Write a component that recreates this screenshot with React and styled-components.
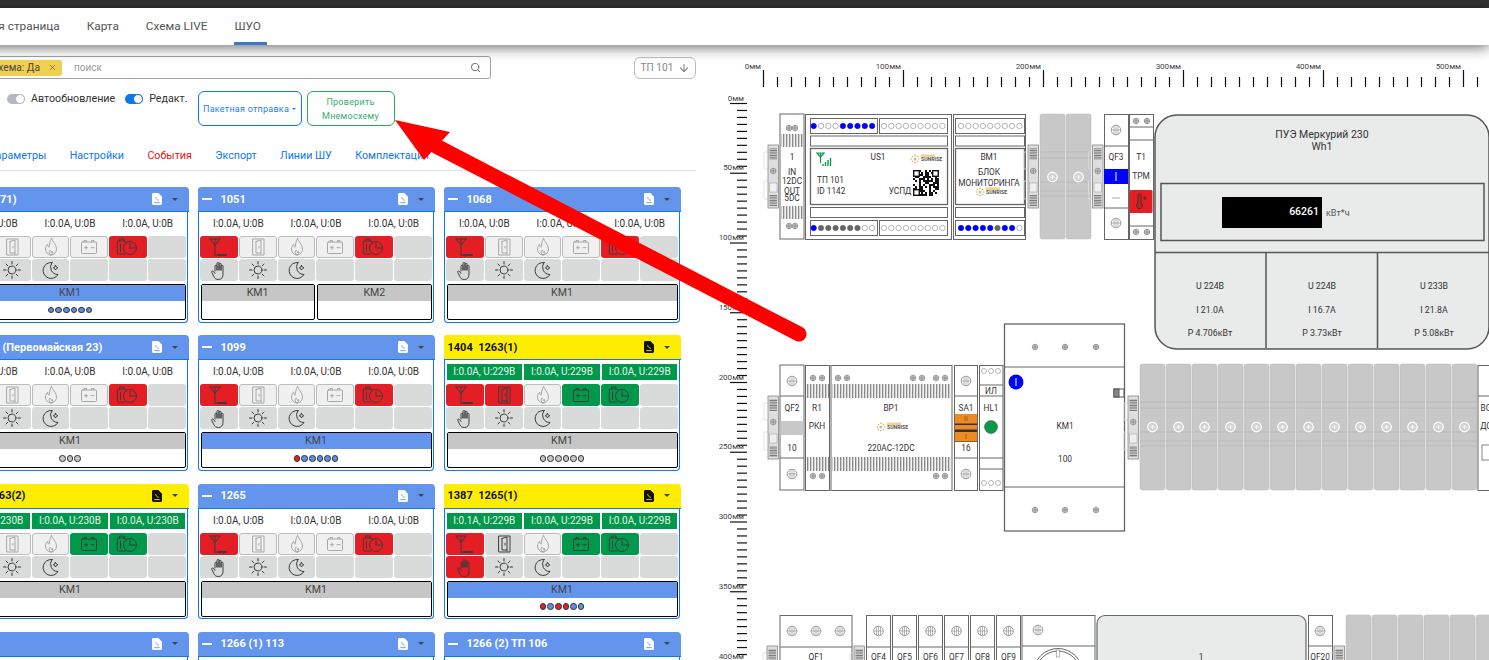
import React from "react";
import styled, { createGlobalStyle } from "styled-components";
import { Search, X, ArrowDown } from "lucide-react";

const GlobalStyle = createGlobalStyle`
    html, body {
        margin: 0;
        padding: 0;
        background: #fff;
        overflow: hidden;
        font-family: Roboto, "Liberation Sans", sans-serif;
    }
`;

const info0 = ["I:0.0A, U:0B", "I:0.0A, U:0B", "I:0.0A, U:0B"];
const info229 = ["I:0.0A, U:229B", "I:0.0A, U:229B", "I:0.0A, U:229B"];
const info230 = ["I:0.0A, U:230B", "I:0.0A, U:230B", "I:0.0A, U:230B"];
const iconOrder = ["antenna", "door", "fire", "battery", "timer"];
const B = "#5f8fe4";
const R = "#e31e24";
const G = "#c5c6c5";

const cards = [
    { title: "103 (71)", info: info0, states: ["red", "off", "off", "off", "red"], km: [{ name: "KM1", on: true, dots: [B, B, B, B, B, B] }] },
    { title: "1051", info: info0, states: ["red", "off", "off", "off", "red"], km: [{ name: "KM1" }, { name: "KM2" }] },
    { title: "1068", info: info0, states: ["red", "off", "off", "off", "red"], km: [{ name: "KM1" }] },
    { title: "1098 (Первомайская 23)", info: info0, states: ["red", "off", "off", "off", "red"], km: [{ name: "KM1", dots: [G, G, G] }] },
    { title: "1099", info: info0, states: ["red", "off", "off", "off", "red"], km: [{ name: "KM1", on: true, dots: [R, B, B, B, B, B] }] },
    { title: "1404  1263(1)", yellow: true, info: info229, states: ["red", "red", "off", "green", "green"], km: [{ name: "KM1", dots: [G, G, G, G, G, G] }] },
    { title: "1403  1263(2)", yellow: true, info: info230, states: ["red", "off", "off", "green", "green"], km: [{ name: "KM1" }] },
    { title: "1265", info: info0, states: ["red", "off", "off", "off", "red"], km: [{ name: "KM1" }] },
    { title: "1387  1265(1)", yellow: true, info: ["I:0.1A, U:229B", "I:0.0A, U:229B", "I:0.0A, U:229B"], states: ["red", "gray", "off", "green", "green"], hand: "red", km: [{ name: "KM1", on: true, dots: [R, B, R, R, B, B] }] },
    { title: "1064", info: info0, states: ["red", "off", "off", "off", "red"], km: [{ name: "KM1" }] },
    { title: "1266 (1) 113", info: info0, states: ["red", "off", "off", "off", "red"], km: [{ name: "KM1" }] },
    { title: "1266 (2) ТП 106", info: info0, states: ["red", "off", "off", "off", "red"], km: [{ name: "KM1" }] },
];

const CellIcon = ({ name, muted }) => (
    <CellSvg viewBox="0 0 38 22" $muted={muted}>
        {name === "antenna" && (
            <>
                <path d="M10 3h10M10 3l5 6.5L20 3M15 3v16M15 19h3" />
                <path d="M18 19h8" strokeDasharray="1.6 .6" strokeWidth="2" />
            </>
        )}
        {name === "door" && (
            <>
                <rect x="14" y="3" width="11" height="16" />
                <path d="M17 5.5l5-1.5v14M17 5.5V17h5M20 10.5v1.5" />
            </>
        )}
        {name === "fire" && (
            <path d="M19.5 2.5c.6 3.2 5 5.6 5 10.5a5.5 6 0 0 1-11 0c0-2.3 1-3.6 2.2-4.800 0 1.800.5 2.600 1.400 3 .8-3 .4-5.800 2.400-8.700zM19 19c-2-1-2.500-3-1-5 .5 1 1.500 1 2 3 .3-.6.5-1 .5-1.500.7 1.500.3 3-1.500 3.500z" />
        )}
        {name === "battery" && (
            <>
                <rect x="11.5" y="6" width="15" height="11.5" rx="1" />
                <path d="M14 6V4.500h2.500V6M21.500 6V4.500H24V6M14.500 11.700h3M16 10.200v3M21 11.700h3" />
            </>
        )}
        {name === "timer" && (
            <>
                <path d="M16 18H9.500a1.200 1.200 0 0 1-1.200-1.200V6.200A1.200 1.200 0 0 1 9.500 5h6.500a1.200 1.200 0 0 1 1.200 1.200V7M10.500 5V3h4.500v2M11.500 8v7.500" />
                <circle cx="21" cy="12" r="6.5" />
                <path d="M21 12V7.500M21 12h5.500" />
            </>
        )}
        {name === "hand" && (
            <path d="M15 12V7.200a1 1 0 0 1 2 0V11M17 11V4.500a1 1 0 0 1 2 0V11M19 11V5.200a1 1 0 0 1 2 0V11M21 11V7.200a1 1 0 0 1 2 0v8.300c0 3-1.800 5-4.500 5-2.500 0-3.800-1-4.700-3l-2-4a1 1 0 0 1 1.800-1l1.400 2" />
        )}
        {name === "sun" && (
            <>
                <circle cx="19" cy="11" r="4" />
                <path d="M19 2.500v2.500M19 17v2.500M10.500 11H13M25 11h2.500M13 5l1.700 1.700M23.300 15.300L25 17M13 17l1.700-1.700M23.300 6.700L25 5" strokeDasharray="1.2 .5" />
            </>
        )}
        {name === "moon" && (
            <>
                <path d="M20 3.500a8 8 0 1 0 6 12 7.500 7.500 0 0 1-6-12z" />
                <path d="M23.500 6.500l.8 1.500 1.500.8-1.500.8-.8 1.400-.8-1.400-1.400-.8 1.400-.8z" />
            </>
        )}
    </CellSvg>
);

const Card = ({ title, yellow, info, states, hand, km }) => (
    <StyledCard>
        <CardHeader $yellow={yellow}>
            {!yellow && <Collapse />}
            <CardTitle>{title}</CardTitle>
            <FileIcon viewBox="0 0 11 13" $yellow={yellow}>
                <path d="M0 1.500A1.500 1.500 0 0 1 1.500 0H7l4 4v7.500A1.500 1.500 0 0 1 9.500 13h-8A1.500 1.500 0 0 1 0 11.500z" />
                <path className="mark" d="M4 4.500c.5 2 1.500 3 3.500 3.500M2.500 10.500h6" />
            </FileIcon>
            <Caret />
        </CardHeader>
        <CardBody>
            <InfoRow>
                {info.map((text, i) => (
                    <InfoCell key={i} $live={yellow}>{text}</InfoCell>
                ))}
            </InfoRow>
            <StatusGrid>
                {iconOrder.map((name, i) => (
                    <StatusCell key={name} $state={states[i]}>
                        <CellIcon name={name} muted={states[i] === "off"} />
                    </StatusCell>
                ))}
                <StatusCell />
                <StatusCell $state={hand}>
                    <CellIcon name="hand" />
                </StatusCell>
                <StatusCell>
                    <CellIcon name="sun" />
                </StatusCell>
                <StatusCell>
                    <CellIcon name="moon" />
                </StatusCell>
                <StatusCell />
                <StatusCell />
                <StatusCell />
            </StatusGrid>
            <KmRow>
                {km.map((item) => (
                    <KmBox key={item.name}>
                        <KmTitle $on={item.on}>{item.name}</KmTitle>
                        <KmDots>
                            {(item.dots || []).map((color, i) => (
                                <KmDot key={i} $color={color} />
                            ))}
                        </KmDots>
                    </KmBox>
                ))}
            </KmRow>
        </CardBody>
    </StyledCard>
);

/* --- mnemonic diagram --- */

const Screw = ({ x, y }) => (
    <g>
        <circle cx={x} cy={y} r="2.8" fill="#c9c9c9" stroke="#888" strokeWidth=".7" />
        <path d={`M${x - 2.5} ${y}h5M${x} ${y - 2.5}v5`} stroke="#666" strokeWidth=".5" />
    </g>
);

const CrossScrew = ({ x, y }) => (
    <g>
        <circle cx={x} cy={y} r="4.8" fill="#fff" stroke="#888" strokeWidth=".8" />
        <path d={`M${x - 4.8} ${y}h9.6M${x} ${y - 4.8}v9.6M${x - 2} ${y - 4}v8M${x + 2} ${y - 4}v8`} stroke="#888" strokeWidth=".6" />
    </g>
);

const Frame = ({ x, y, w, h, fill = "#fff", sw = 1 }) => (
    <rect x={x} y={y} width={w} height={h} fill={fill} stroke="#666" strokeWidth={sw} />
);

const Hline = ({ x, y, w }) => <path d={`M${x} ${y}h${w}`} stroke="#666" strokeWidth="1" />;

const Comb = ({ x, y, w, h = 13 }) => <rect x={x} y={y} width={w} height={h} fill="url(#comb)" />;

const Clip = ({ x, y }) => (
    <g>
        <path d={`M${x - 4} ${y + 7}h4M${x - 4} ${y + 24}h4M${x - 4} ${y + 7}v17M${x - 4} ${y + 36}h4M${x - 4} ${y + 54}h4M${x - 4} ${y + 36}v18`} stroke="#ddd" strokeWidth=".8" fill="none" />
        <rect x={x} y={y} width="10.5" height="63" fill="#dedede" stroke="#888" strokeWidth=".8" />
        <rect x={x + 1.5} y={y + 3} width="7.5" height="12" fill="url(#hatch)" />
        <rect x={x + 1.5} y={y + 38} width="7.5" height="9" fill="#f0f0f0" stroke="#999" strokeWidth=".5" />
        <rect x={x + 1.5} y={y + 50} width="7.5" height="11" fill="url(#hatch)" />
        <Screw x={x + 5.25} y={y + 26} />
    </g>
);

const GrayBlock = ({ x, y, h }) => (
    <g>
        <rect x={x} y={y} width="25" height={h} rx="2" fill="#c8c8c8" stroke="#bbb" strokeWidth=".5" />
        <path d={`M${x} ${y + 38}h25M${x} ${y + 44}h25M${x} ${y + 68}h25M${x} ${y + 77}h25M${x} ${y + 82}h25`} stroke="#b0b0b0" strokeWidth=".6" />
        <circle cx={x + 12.5} cy={y + 63} r="4.8" fill="#d4d4d4" stroke="#fff" strokeWidth="1.2" />
        <path d={`M${x + 10.5} ${y + 63}h4M${x + 12.5} ${y + 61}v4`} stroke="#fff" strokeWidth=".8" />
    </g>
);

const Leds = ({ x, y, colors }) => (
    <g>
        {colors.map((c, i) => (
            <circle key={i} cx={x + i * 7.3} cy={y} r="2.7" fill={c} stroke={c === "#fff" ? "#888" : c} strokeWidth=".6" />
        ))}
    </g>
);

const Logo = ({ x, y }) => (
    <g>
        {[0, 45, 90, 135, 180, 225, 270, 315].map((a) => (
            <circle key={a} cx={x + Math.cos((a * Math.PI) / 180) * 3.6} cy={y + Math.sin((a * Math.PI) / 180) * 3.6} r=".8" fill="#f0b030" />
        ))}
        <circle cx={x} cy={y} r="1.5" fill="#9cc4e8" />
        <rect x={x + 6} y={y - 4.5} width="14" height="2.5" fill="#f6d090" />
        <LogoText x={x + 6} y={y + 2}>SUNRISE</LogoText>
    </g>
);

const qrCells = Array.from({ length: 169 }, (_, i) => i).filter((i) => (i * i * 31 + i * 17 + (i >> 2) * 7) % 11 < 5);

const Qr = ({ x, y }) => (
    <g>
        {qrCells.map((i) => (
            <rect key={i} x={x + (i % 13) * 2} y={y + Math.floor(i / 13) * 2} width="2" height="2" fill="#111" />
        ))}
        {[[0, 0], [19, 0], [0, 19]].map(([dx, dy]) => (
            <rect key={dx + "-" + dy} x={x + dx + 0.7} y={y + dy + 0.7} width="5.6" height="5.6" fill="#fff" stroke="#111" strokeWidth="1.4" />
        ))}
    </g>
);

const Ruler = () => {
    const top = [];
    for (let mm = 0; mm <= 520; mm += 10) top.push(mm);
    const left = [];
    for (let mm = 0; mm <= 400; mm += 5) left.push(mm);
    return (
        <g stroke="#111" strokeWidth="1.2">
            {top.map((mm) => (
                <path key={mm} d={`M${763.5 + mm * 1.4} ${mm % 100 === 0 ? 70 : 77}V87`} />
            ))}
            {left.map((mm) => (
                <path key={mm} d={`M${mm % 50 === 0 ? 730 : 737} ${103.5 + mm * 1.395}H747`} />
            ))}
            {[0, 100, 200, 300, 400, 500].map((mm) => (
                <RulerText key={mm} x={761 + mm * 1.4} y={66} stroke="none">{mm}мм</RulerText>
            ))}
            {[0, 50, 100, 150, 200, 250, 300, 350, 400].map((mm) => (
                <RulerText key={mm} x={744} y={98 + mm * 1.395} stroke="none">{mm}мм</RulerText>
            ))}
        </g>
    );
};

const Diagram = () => (
    <DiagramSvg viewBox="696 45 793 615">
        <defs>
            <pattern id="comb" width="3" height="4" patternUnits="userSpaceOnUse">
                <rect width="3" height="4" fill="#f2f2f2" />
                <rect width="1.3" height="4" fill="#8a8a8a" />
            </pattern>
            <pattern id="hatch" width="4" height="2.5" patternUnits="userSpaceOnUse">
                <rect width="4" height="2.5" fill="#c4c4c4" />
                <rect width="4" height="1" fill="#777" />
            </pattern>
        </defs>
        <Ruler />

        {/* top rail */}
        <Clip x={768} y={145} />
        <Frame x={780} y={114} w={24} h={125} />
        <Screw x={789} y={128} />
        <Screw x={795} y={128} />
        <Comb x={781} y={134} w={22} />
        <Comb x={781} y={206} w={22} />
        <Screw x={789} y={226} />
        <Screw x={795} y={226} />
        <Label x={792} y={157}>1</Label>
        <Label x={792} y={172}>IN</Label>
        <Label x={792} y={181}>12DC</Label>
        <Label x={792} y={191}>OUT</Label>
        <Label x={792} y={198}>5DC</Label>

        <Frame x={805.5} y={114.5} w={146} h={125} />
        <Frame x={810.5} y={118.5} w={67} h={15} />
        <Leds x={813.7} y={126} colors={["#00f", "#fff", "#fff", "#fff", "#00f", "#00f", "#00f", "#00f", "#00f"]} />
        <Frame x={879.5} y={118.5} w={68} h={15} />
        <Leds x={884} y={126} colors={Array(9).fill("#fff")} />
        <Frame x={810.5} y={136} w={137} h={10} />
        <Frame x={810.5} y={148.5} w={137} h={56} sw={1.3} />
        <Frame x={810.5} y={207.5} w={137} h={10} />
        <Frame x={810.5} y={220.5} w={67} h={15} />
        <Leds x={813.7} y={228} colors={["#00f", "#666", "#666", "#666", "#666", "#666", "#666", "#fff", "#fff"]} />
        <Frame x={879.5} y={220.5} w={68} h={15} />
        <Leds x={884} y={228} colors={Array(9).fill("#fff")} />
        <path d="M817 153h7l-3.5 4zM820.5 153v10" stroke="#0a9a4a" strokeWidth="1.2" fill="none" />
        <path d="M823 166v-2M825.5 166v-4M828 166v-6M830.5 166v-8" stroke="#0a9a4a" strokeWidth="1.4" />
        <Label x={878} y={157}>US1</Label>
        <LabelStart x={817} y={180}>ТП 101</LabelStart>
        <LabelStart x={817} y={191}>ID 1142</LabelStart>
        <Label x={900} y={191}>УСПД</Label>
        <Logo x={915} y={159} />
        <Qr x={913} y={170} />

        <Frame x={953.5} y={114.5} w={72} h={125} />
        <Frame x={955.5} y={118.5} w={69} h={15} />
        <Leds x={961} y={126} colors={Array(9).fill("#fff")} />
        <Frame x={955.5} y={136} w={69} h={10} />
        <Frame x={955.5} y={148.5} w={69} h={56} sw={1.3} />
        <Frame x={955.5} y={207.5} w={69} h={10} />
        <Frame x={955.5} y={220.5} w={69} h={15} />
        <Leds x={961} y={228} colors={["#00f", "#00f", "#00f", "#00f", "#00f", "#666", "#00f", "#00f", "#fff"]} />
        <Label x={989} y={157}>BM1</Label>
        <Label x={989} y={172}>БЛОК</Label>
        <Label x={989} y={183}>МОНИТОРИНГА</Label>
        <Logo x={980} y={192} />

        <Clip x={1028} y={145} />
        <GrayBlock x={1040} y={114} h={125} />
        <GrayBlock x={1066} y={114} h={125} />
        <Clip x={1092.5} y={145} />

        <Frame x={1104.5} y={114.5} w={24} h={125} />
        <CrossScrew x={1116} y={130} />
        <Hline x={1104} y={146} w={24} />
        <Label x={1116} y={157}>QF3</Label>
        <rect x={1104} y={169} width={24} height={15} fill="#00f" />
        <path d="M1116 172v9" stroke="#fff" strokeWidth="1" />
        <path d="M1112 198h8" stroke="#aaa" strokeWidth="1" />
        <Hline x={1104} y={208} w={24} />
        <CrossScrew x={1116} y={223} />

        <Frame x={1129.5} y={114.5} w={24} h={125} />
        <Screw x={1136} y={121} />
        <Screw x={1147} y={121} />
        <Hline x={1129} y={127} w={24} />
        <Hline x={1129} y={140} w={24} />
        <Label x={1141} y={157}>T1</Label>
        <Label x={1141} y={176}>ТРМ</Label>
        <rect x={1129.5} y={190} width={23} height={23} rx={1.5} fill="#e31e24" />
        <path d="M1138 195v8a3 3 0 1 0 3 0v-8a1.5 1.5 0 0 0-3 0zM1143 198h4M1145 196v4" stroke="#6a2020" strokeWidth="1" fill="#a03030" />
        <Hline x={1129} y={226} w={24} />
        <Screw x={1136} y={232} />
        <Screw x={1147} y={232} />

        <rect x={1155} y={115} width={334} height={234} rx={22} fill="#e9eaea" stroke="#555" strokeWidth="1.5" />
        <BigLabel x={1322} y={134}>ПУЭ Меркурий 230</BigLabel>
        <BigLabel x={1322} y={146}>Wh1</BigLabel>
        <rect x={1161} y={183.5} width={323} height={57} fill="none" stroke="#555" strokeWidth="1.5" />
        <rect x={1222} y={197} width={100} height={31} fill="#000" />
        <MeterValue x={1319} y={215}>66261</MeterValue>
        <MeterUnit x={1326} y={216}>кВт*ч</MeterUnit>
        <path d="M1155 252.5h334M1266 252v96M1377.5 252v96" stroke="#555" strokeWidth="1.5" fill="none" />
        <PhaseLabel x={1210} y={286}>U 224В</PhaseLabel>
        <PhaseLabel x={1210} y={310}>I 21.0A</PhaseLabel>
        <PhaseLabel x={1210} y={333}>P 4.706кВт</PhaseLabel>
        <PhaseLabel x={1322} y={286}>U 224В</PhaseLabel>
        <PhaseLabel x={1322} y={310}>I 16.7A</PhaseLabel>
        <PhaseLabel x={1322} y={333}>P 3.73кВт</PhaseLabel>
        <PhaseLabel x={1434} y={286}>U 233В</PhaseLabel>
        <PhaseLabel x={1434} y={310}>I 21.8A</PhaseLabel>
        <PhaseLabel x={1434} y={333}>P 5.08кВт</PhaseLabel>

        {/* middle rail */}
        <Clip x={768} y={396} />
        <Frame x={780} y={365} w={24} h={125} />
        <CrossScrew x={792} y={381} />
        <Hline x={780} y={396} w={24} />
        <Label x={792} y={408}>QF2</Label>
        <rect x={780.5} y={421} width={23} height={14} fill="#c8c8c8" />
        <Label x={792} y={448}>10</Label>
        <Hline x={780} y={458} w={24} />
        <CrossScrew x={792} y={474} />

        <Frame x={805.5} y={365.5} w={24} h={125} />
        <Screw x={813} y={378} />
        <Screw x={822} y={378} />
        <Comb x={806} y={384} w={23} h={14} />
        <Comb x={806} y={457} w={23} h={14} />
        <Label x={817} y={408}>R1</Label>
        <Label x={817} y={426}>РКН</Label>
        <Screw x={813} y={476} />
        <Screw x={822} y={476} />

        <Frame x={831} y={365.5} w={121} h={125} />
        <Screw x={838} y={378} />
        <Screw x={847} y={378} />
        <Screw x={913} y={378} />
        <Screw x={922} y={378} />
        <Screw x={936} y={378} />
        <Screw x={945} y={378} />
        <Comb x={832} y={384} w={119} h={14} />
        <Comb x={832} y={457} w={119} h={14} />
        <Label x={891} y={408}>BP1</Label>
        <Logo x={881} y={427} />
        <Label x={891} y={448}>220AC-12DC</Label>
        <Screw x={936} y={476} />
        <Screw x={945} y={476} />

        <Frame x={954.5} y={365.5} w={23} h={125} />
        <CrossScrew x={966} y={381} />
        <Hline x={954} y={396} w={24} />
        <Label x={966} y={408}>SA1</Label>
        <rect x={955} y={414} width={22} height={28} fill="#333" />
        <rect x={955} y={414} width={22} height={9.5} fill="#ee8a22" />
        <rect x={955} y={425} width={22} height={4.5} fill="#ee8a22" />
        <rect x={955} y={432} width={22} height={9.5} fill="#ee8a22" />
        <path d="M965 416v5M967 416v5M966 434v5" stroke="#8a5a20" strokeWidth=".8" />
        <Label x={966} y={448}>16</Label>
        <Hline x={954} y={458} w={24} />
        <CrossScrew x={966} y={474} />

        <Frame x={979.5} y={365.5} w={23.5} h={125} />
        {[984, 991, 998].map((x) => (
            <circle key={x} cx={x} cy={371} r="2.5" fill="#fff" stroke="#999" strokeWidth=".7" />
        ))}
        <Hline x={979} y={385} w={24} />
        <Label x={991} y={391}>ИЛ</Label>
        <Hline x={979} y={396} w={24} />
        <Label x={991} y={408}>HL1</Label>
        <circle cx={991} cy={427} r={6.5} fill="#0a9a4a" stroke="#444" strokeWidth=".5" />
        <Hline x={979} y={458} w={24} />
        <Hline x={979} y={469} w={24} />
        {[984, 991, 998].map((x) => (
            <circle key={x} cx={x} cy={483} r="2.5" fill="#fff" stroke="#999" strokeWidth=".7" />
        ))}

        <Frame x={1004.5} y={324} w={120} h={207} sw={1.3} />
        <Hline x={1004} y={367} w={120} />
        <Hline x={1004} y={487} w={120} />
        {[1035, 1065, 1096].map((x) => (
            <Screw key={x} x={x} y={347} />
        ))}
        {[1035, 1065, 1096].map((x) => (
            <Screw key={x} x={x} y={510} />
        ))}
        <circle cx={1016} cy={382} r={7.5} fill="#00f" />
        <path d="M1016 378v8" stroke="#fff" strokeWidth="1" />
        <rect x={1114} y={389} width={10} height={8} fill="#fff" stroke="#555" strokeWidth="1" />
        <rect x={1114} y={389} width={5} height={8} fill="#888" stroke="#555" strokeWidth="1" />
        <Label x={1065} y={426}>KM1</Label>
        <Label x={1065} y={459}>100</Label>

        <Clip x={1128} y={396} />
        {Array.from({ length: 13 }, (_, i) => (
            <GrayBlock key={i} x={1140 + i * 26} y={364} h={126} />
        ))}
        <Frame x={1478} y={365.5} w={30} h={125} />
        <Hline x={1478} y={396} w={12} />
        <Label x={1486} y={408}>BG</Label>
        <Label x={1486} y={426}>ДС</Label>
        <rect x={1482} y={445} width={10} height={15} fill="#fff" stroke="#666" strokeWidth=".8" />

        {/* bottom rail */}
        <Clip x={767} y={646} />
        <Frame x={780} y={615.5} w={72} h={90} />
        {[792, 816, 840].map((x) => (
            <CrossScrew key={x} x={x} y={631} />
        ))}
        <Hline x={780} y={647} w={72} />
        <Label x={816} y={657}>QF1</Label>
        <Clip x={854} y={646} />
        {["QF4", "QF5", "QF6", "QF7", "QF8", "QF9"].map((name, i) => (
            <g key={name}>
                <Frame x={866.5 + i * 26} y={615.5} w={24} h={90} />
                <CrossScrew x={878.5 + i * 26} y={631} />
                <Hline x={866 + i * 26} y={647} w={24} />
                <Label x={878.5 + i * 26} y={657}>{name}</Label>
            </g>
        ))}
        <Frame x={1022} y={615.5} w={73} h={90} />
        <CrossScrew x={1038} y={630} />
        <Hline x={1022} y={646} w={73} />
        <circle cx={1058} cy={673} r={24.5} fill="#fff" stroke="#666" strokeWidth="1" />
        <circle cx={1058} cy={673} r={22} fill="#fff" stroke="#666" strokeWidth="1" />
        <rect x={1056.5} y={650} width={3} height={7} fill="#fff" stroke="#888" strokeWidth=".6" />
        <rect x={1097} y={615.5} width={209} height={90} rx={8} fill="#e9eaea" stroke="#666" strokeWidth="1.2" />
        <Label x={1201} y={657}>1</Label>
        <Frame x={1308.5} y={615.5} w={24} h={90} />
        <CrossScrew x={1320} y={631} />
        <Hline x={1308} y={646} w={24} />
        <Label x={1320} y={657}>QF20</Label>
        <Clip x={1334} y={646} />
        {Array.from({ length: 6 }, (_, i) => (
            <rect key={i} x={1346 + i * 26} y={615} width={25} height={60} rx={2} fill="#c8c8c8" stroke="#bbb" strokeWidth=".5" />
        ))}
    </DiagramSvg>
);

const App = () => (
    <Page>
        <GlobalStyle />
        <TopBar />
        <Nav>
            <NavItem>Главная страница</NavItem>
            <NavItem>Карта</NavItem>
            <NavItem>Схема LIVE</NavItem>
            <NavItem $active>ШУО</NavItem>
        </Nav>
        <Content>
            <LeftPanel>
                <SearchRow>
                    <SearchBox>
                        <Chip>
                            Мнемосхема: Да
                            <X size={9} strokeWidth={1.5} />
                        </Chip>
                        <SearchInput placeholder="поиск" />
                        <Search size={11} color="#666" />
                    </SearchBox>
                    <PointButton>
                        ТП 101
                        <ArrowDown size={12} strokeWidth={2.2} />
                    </PointButton>
                </SearchRow>
                <Toolbar>
                    <Toggle />
                    <ToggleText>Автообновление</ToggleText>
                    <Toggle $on />
                    <ToggleText>Редакт.</ToggleText>
                    <BatchButton>
                        Пакетная отправка
                        <SmallCaret />
                    </BatchButton>
                    <CheckButton>Проверить Мнемосхему</CheckButton>
                </Toolbar>
                <Tabs>
                    <Tab>Параметры</Tab>
                    <Tab>Настройки</Tab>
                    <Tab $red>События</Tab>
                    <Tab>Экспорт</Tab>
                    <Tab>Линии ШУ</Tab>
                    <Tab>Комплектация</Tab>
                </Tabs>
                <CardGrid>
                    {cards.map((card, i) => (
                        <Card key={i} {...card} />
                    ))}
                </CardGrid>
            </LeftPanel>
            <Diagram />
        </Content>
        <ArrowOverlay viewBox="0 0 1489 660">
            <path d="M436 146L799 334" stroke="#ff0000" strokeWidth="15" strokeLinecap="round" />
            <polygon points="395,120 450,132 424,160" fill="#ff0000" />
        </ArrowOverlay>
    </Page>
);

const Page = styled.div`
    position: relative;
    width: 1489px;
    height: 660px;
    overflow: hidden;
    background: #fff;
`;

const TopBar = styled.div`
    height: 8px;
    background: #333333;
`;

const Nav = styled.div`
    position: relative;
    z-index: 2;
    display: flex;
    justify-content: flex-start;
    height: 37px;
    margin-left: -40px;
    background: #fff;
    box-shadow: 0 2px 14px rgba(0, 0, 0, 0.6);
    gap: 27px;
`;

const NavItem = styled.div`
    font-size: 11.8px;
    line-height: 36px;
    color: #555;
    height: 37px;
    box-sizing: border-box;
    width: ${(p) => (p.$active ? "33px" : "auto")};
    border-bottom: 3px solid ${(p) => (p.$active ? "#3d78c8" : "transparent")};
`;

const Content = styled.div`
    display: flex;
    height: 615px;
    overflow: hidden;
`;

const LeftPanel = styled.div`
    flex: 0 0 744px;
    margin-left: -48px;
    padding-top: 11px;
    box-sizing: border-box;
`;

const SearchRow = styled.div`
    display: flex;
    justify-content: space-between;
    align-items: center;
    height: 23px;
`;

const SearchBox = styled.div`
    display: flex;
    align-items: center;
    width: 539px;
    height: 23px;
    box-sizing: border-box;
    border: 1px solid #a0a0a0;
    border-radius: 3px;
    padding: 0 9px 0 2px;
`;

const Chip = styled.div`
    display: flex;
    align-items: center;
    justify-content: flex-end;
    gap: 8px;
    width: 107px;
    height: 16px;
    padding-right: 5px;
    box-sizing: border-box;
    background: #f0d050;
    border-radius: 3px;
    font-size: 10.2px;
    color: #444;
    white-space: nowrap;
`;

const SearchInput = styled.input`
    flex: 1;
    border: 0;
    outline: none;
    padding: 0;
    margin-left: 12px;
    font: 10px Roboto, sans-serif;
    &::placeholder {
        color: #999;
    }
`;

const PointButton = styled.div`
    display: flex;
    align-items: center;
    justify-content: center;
    gap: 4px;
    width: 62px;
    height: 22px;
    box-sizing: border-box;
    border: 1px solid #bbb;
    border-radius: 6px;
    color: #888;
    font-size: 10.2px;
`;

const Toolbar = styled.div`
    display: flex;
    align-items: flex-start;
    margin-top: 12px;
    padding-left: 55px;
`;

const Toggle = styled.div`
    position: relative;
    flex: none;
    width: 18px;
    height: 10px;
    margin-top: 3px;
    border-radius: 5px;
    background: ${(p) => (p.$on ? "#0a78f0" : "#b4b7bb")};
    &::after {
        content: "";
        position: absolute;
        right: 0;
        top: 0;
        width: 10px;
        height: 10px;
        box-sizing: border-box;
        border-radius: 50%;
        background: #fff;
        border: 1px solid ${(p) => (p.$on ? "#0a78f0" : "#b4b7bb")};
    }
`;

const ToggleText = styled.div`
    margin: 0 10px 0 6px;
    font-size: 10.7px;
    line-height: 15px;
    color: #333;
`;

const BatchButton = styled.div`
    display: flex;
    align-items: center;
    justify-content: center;
    gap: 3px;
    flex: none;
    width: 104px;
    height: 35px;
    box-sizing: border-box;
    border: 1px solid #0a78f0;
    border-radius: 6px;
    font-size: 9px;
    letter-spacing: 0.25px;
    color: #1b7fe8;
`;

const SmallCaret = styled.span`
    width: 0;
    height: 0;
    border-left: 2px solid transparent;
    border-right: 2px solid transparent;
    border-top: 2px solid #1b7fe8;
`;

const CheckButton = styled.div`
    display: flex;
    align-items: center;
    justify-content: center;
    flex: none;
    width: 88px;
    height: 35px;
    box-sizing: border-box;
    margin-left: 5px;
    padding: 0 12px;
    border: 1px solid #2ea84f;
    border-radius: 6px;
    font-size: 9px;
    line-height: 14px;
    letter-spacing: 0.25px;
    text-align: center;
    color: #36ad6c;
`;

const Tabs = styled.div`
    display: flex;
    gap: 23.4px;
    padding: 22px 0 6px 36px;
    border-bottom: 1px solid #dee2e6;
`;

const Tab = styled.div`
    font-size: 10.7px;
    line-height: 16px;
    color: ${(p) => (p.$red ? "#ee1111" : "#0a78f0")};
`;

const CardGrid = styled.div`
    display: grid;
    grid-template-columns: repeat(3, 236px);
    grid-auto-rows: 135px;
    gap: 13.33px 10px;
    margin-top: 16px;
`;

const StyledCard = styled.div`
    box-sizing: border-box;
    height: 135.5px;
    border: 1.5px solid #0a78f0;
    border-top: 0;
    border-radius: 4px;
    background: #fff;
`;

const CardHeader = styled.div`
    display: flex;
    align-items: center;
    height: 24px;
    margin: 0 -1.5px;
    padding: 0 11px 0 4px;
    border-radius: 4px 4px 0 0;
    border-bottom: 1.5px solid #0a78f0;
    background: ${(p) => (p.$yellow ? "#ffed00" : "#6495ed")};
    color: ${(p) => (p.$yellow ? "#111" : "#fff")};
`;

const Collapse = styled.span`
    flex: none;
    width: 10px;
    height: 2px;
    margin-right: 9px;
    background: #fff;
`;

const CardTitle = styled.div`
    flex: 1;
    font-size: 11px;
    font-weight: 700;
    white-space: pre;
`;

const FileIcon = styled.svg`
    width: 10px;
    height: 12px;
    margin-right: 10px;
    fill: ${(p) => (p.$yellow ? "#111" : "#fff")};
    .mark {
        fill: none;
        stroke: ${(p) => (p.$yellow ? "#ffed00" : "#6495ed")};
        stroke-width: 1;
    }
`;

const Caret = styled.span`
    width: 0;
    height: 0;
    border-left: 3.5px solid transparent;
    border-right: 3.5px solid transparent;
    border-top: 3.5px solid #444;
`;

const CardBody = styled.div`
    padding: 4px 1px 0;
`;

const InfoRow = styled.div`
    display: grid;
    grid-template-columns: repeat(3, 1fr);
    gap: 2px;
    padding: 0 0.5px;
`;

const InfoCell = styled.div`
    height: 16px;
    font-size: 10px;
    line-height: 16px;
    text-align: center;
    white-space: nowrap;
    color: ${(p) => (p.$live ? "#e8f5ec" : "#333")};
    background: ${(p) => (p.$live ? "#00984a" : "transparent")};
`;

const cellBackground = { red: "#e31e24", green: "#00984a", off: "#f0f0f0", gray: "#d9dada" };

const StatusGrid = styled.div`
    display: grid;
    grid-template-columns: repeat(6, 1fr);
    grid-auto-rows: 22px;
    gap: 1px;
    margin-top: 4px;
`;

const StatusCell = styled.div`
    box-sizing: border-box;
    border-radius: 3px;
    background: ${(p) => cellBackground[p.$state] || "#d9dada"};
    border: ${(p) => (p.$state === "off" ? "1px solid #bcbcbc" : "0")};
    display: flex;
    align-items: center;
    justify-content: center;
    overflow: hidden;
`;

const CellSvg = styled.svg`
    flex: none;
    width: 38px;
    height: 22px;
    fill: none;
    stroke: ${(p) => (p.$muted ? "#a8a8a8" : "#3c3c3c")};
    stroke-width: 1;
    stroke-linejoin: round;
    stroke-linecap: round;
`;

const KmRow = styled.div`
    display: flex;
    gap: 2.5px;
    margin: 3px 0.5px 0;
`;

const KmBox = styled.div`
    flex: 1;
    height: 36px;
    box-sizing: border-box;
    border: 1px solid #000;
    border-radius: 2px;
    overflow: hidden;
`;

const KmTitle = styled.div`
    height: 16px;
    font-size: 10.6px;
    line-height: 16px;
    text-align: center;
    color: #444;
    background: ${(p) => (p.$on ? "#6495ed" : "#c5c6c5")};
`;

const KmDots = styled.div`
    display: flex;
    justify-content: center;
    align-items: center;
    gap: 1px;
    height: 18px;
`;

const KmDot = styled.span`
    box-sizing: border-box;
    width: 6.6px;
    height: 6.6px;
    border-radius: 50%;
    border: 1px solid #333;
    background: ${(p) => p.$color};
`;

const DiagramSvg = styled.svg`
    flex: none;
    width: 793px;
    height: 615px;
    font-family: Roboto, "Liberation Sans", sans-serif;
`;

const Label = styled.text`
    font-size: 8.3px;
    fill: #333;
    text-anchor: middle;
    dominant-baseline: central;
`;

const LabelStart = styled(Label)`
    text-anchor: start;
`;

const PhaseLabel = styled(Label)`
    font-size: 8.8px;
`;

const BigLabel = styled(Label)`
    font-size: 10.5px;
`;

const RulerText = styled.text`
    font-size: 8px;
    fill: #444;
    text-anchor: end;
    dominant-baseline: central;
`;

const LogoText = styled.text`
    font-size: 5.2px;
    font-weight: 700;
    fill: #555;
`;

const MeterValue = styled.text`
    font-size: 10.5px;
    font-weight: 500;
    fill: #fff;
    text-anchor: end;
`;

const MeterUnit = styled.text`
    font-size: 9px;
    fill: #555;
`;

const ArrowOverlay = styled.svg`
    position: absolute;
    left: 0;
    top: 0;
    width: 1489px;
    height: 660px;
    z-index: 5;
    pointer-events: none;
`;

export default App;
